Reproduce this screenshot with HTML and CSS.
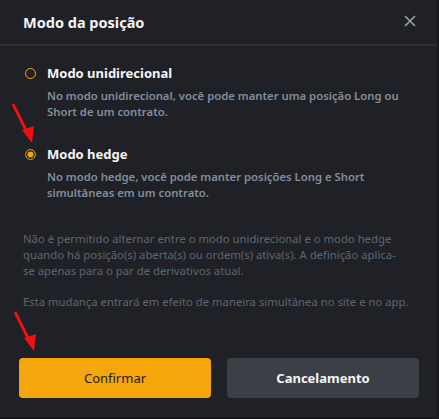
FILE: index.html
```html
<!DOCTYPE html>
<html lang="pt">
<head>
    <meta charset="UTF-8">
    <meta name="viewport" content="width=device-width, initial-scale=1.0">
    <title>Modo da posição</title>
    <link rel="stylesheet" href="styles.css">
</head>
<body>
    <div class="modal">
        <div class="modal-header">
            <span class="modal-title">Modo da posição</span>
            <svg class="close-icon" width="14" height="14" viewBox="0 0 14 14">
                <path d="M2 2 L12 12 M12 2 L2 12" stroke="#9aa0a8" stroke-width="1.6" fill="none"/>
            </svg>
        </div>

        <div class="modal-body">
            <div class="option">
                <span class="radio"></span>
                <div class="option-text">
                    <div class="option-title">Modo unidirecional</div>
                    <div class="option-desc">No modo unidirecional, você pode manter uma posição Long ou Short de um contrato.</div>
                </div>
            </div>

            <div class="option">
                <span class="radio checked"></span>
                <div class="option-text">
                    <div class="option-title">Modo hedge</div>
                    <div class="option-desc">No modo hedge, você pode manter posições Long e Short simultâneas em um contrato.</div>
                </div>
            </div>

            <p class="note note-first">Não é permitido alternar entre o modo unidirecional e o modo hedge quando há posição(s) aberta(s) ou ordem(s) ativa(s). A definição aplica-se apenas para o par de derivativos atual.</p>
            <p class="note">Esta mudança entrará em efeito de maneira simultânea no site e no app.</p>
        </div>

        <div class="modal-footer">
            <button class="btn btn-confirm">Confirmar</button>
            <button class="btn btn-cancel">Cancelamento</button>
        </div>
    </div>

    <!-- annotation arrows -->
    <svg class="arrow arrow-radio" width="30" height="44" viewBox="0 0 30 44">
        <path d="M3 2 L17 30" stroke="#ee1111" stroke-width="3" fill="none"/>
        <polygon points="12,28 24,24 22,41" fill="#ee1111"/>
    </svg>
    <svg class="arrow arrow-button" width="30" height="44" viewBox="0 0 30 44">
        <path d="M3 2 L17 30" stroke="#ee1111" stroke-width="3" fill="none"/>
        <polygon points="12,28 24,24 22,41" fill="#ee1111"/>
    </svg>
</body>
</html>
```

FILE: styles.css
```css
:root {
    --bg: #1f2126;
    --line: #2b2e35;
    --orange: #f4a60a;
    --text: #eaecef;
    --desc: #848e9c;
    --muted: #5e6673;
    --grey-btn: #3c3f46;
}

body {
    margin: 0;
    padding: 0;
    background: #15171b;
    font-family: "Noto Sans", "Open Sans", Arial, sans-serif;
    color: var(--text);
}

.modal {
    width: 437px;
    height: 417px;
    background: var(--bg);
    display: flex;
    flex-direction: column;
}

.modal-header {
    height: 44px;
    display: flex;
    align-items: center;
    justify-content: space-between;
    padding: 0 20px 0 23px;
    border-bottom: 2px solid var(--line);
}

.modal-title {
    font-size: 14.5px;
    font-weight: bold;
    color: #f5f5f5;
}

.close-icon {
    display: block;
    margin-top: -2px;
}

.modal-body {
    padding: 18px 16px 0 23px;
}

.option {
    display: flex;
    gap: 11px;
    margin-bottom: 25px;
    padding-left: 2px;
}

.radio {
    flex: none;
    width: 9px;
    height: 9px;
    border: 1.6px solid var(--orange);
    border-radius: 50%;
    margin-top: 4px;
}

.radio.checked {
    background: var(--orange);
    box-shadow: inset 0 0 0 1.5px var(--bg);
    border-color: #c98a0a;
}

.option-title {
    font-size: 13px;
    font-weight: bold;
    line-height: 18px;
    color: #f5f5f5;
}

.option-desc {
    margin-top: 6px;
    font-size: 11.3px;
    font-weight: 600;
    line-height: 16px;
    color: var(--desc);
}

.note {
    margin: 0 0 15px 0;
    font-size: 11.3px;
    line-height: 16px;
    color: var(--muted);
}

.note-first {
    margin-top: 30px;
    max-width: 375px;
}

.modal-footer {
    margin-top: auto;
    display: flex;
    gap: 16px;
    padding: 0 18px 19px 19px;
}

.btn {
    flex: 1;
    height: 40px;
    border: none;
    border-radius: 4px;
    font-family: inherit;
    font-size: 13px;
    cursor: pointer;
}

.btn-confirm {
    background: var(--orange);
    color: #1e2026;
}

.btn-cancel {
    background: var(--grey-btn);
    color: #f5f5f5;
    font-weight: bold;
}

.arrow {
    position: absolute;
}

.arrow-radio {
    left: 10px;
    top: 102px;
}

.arrow-button {
    left: 12px;
    top: 310px;
}
```
